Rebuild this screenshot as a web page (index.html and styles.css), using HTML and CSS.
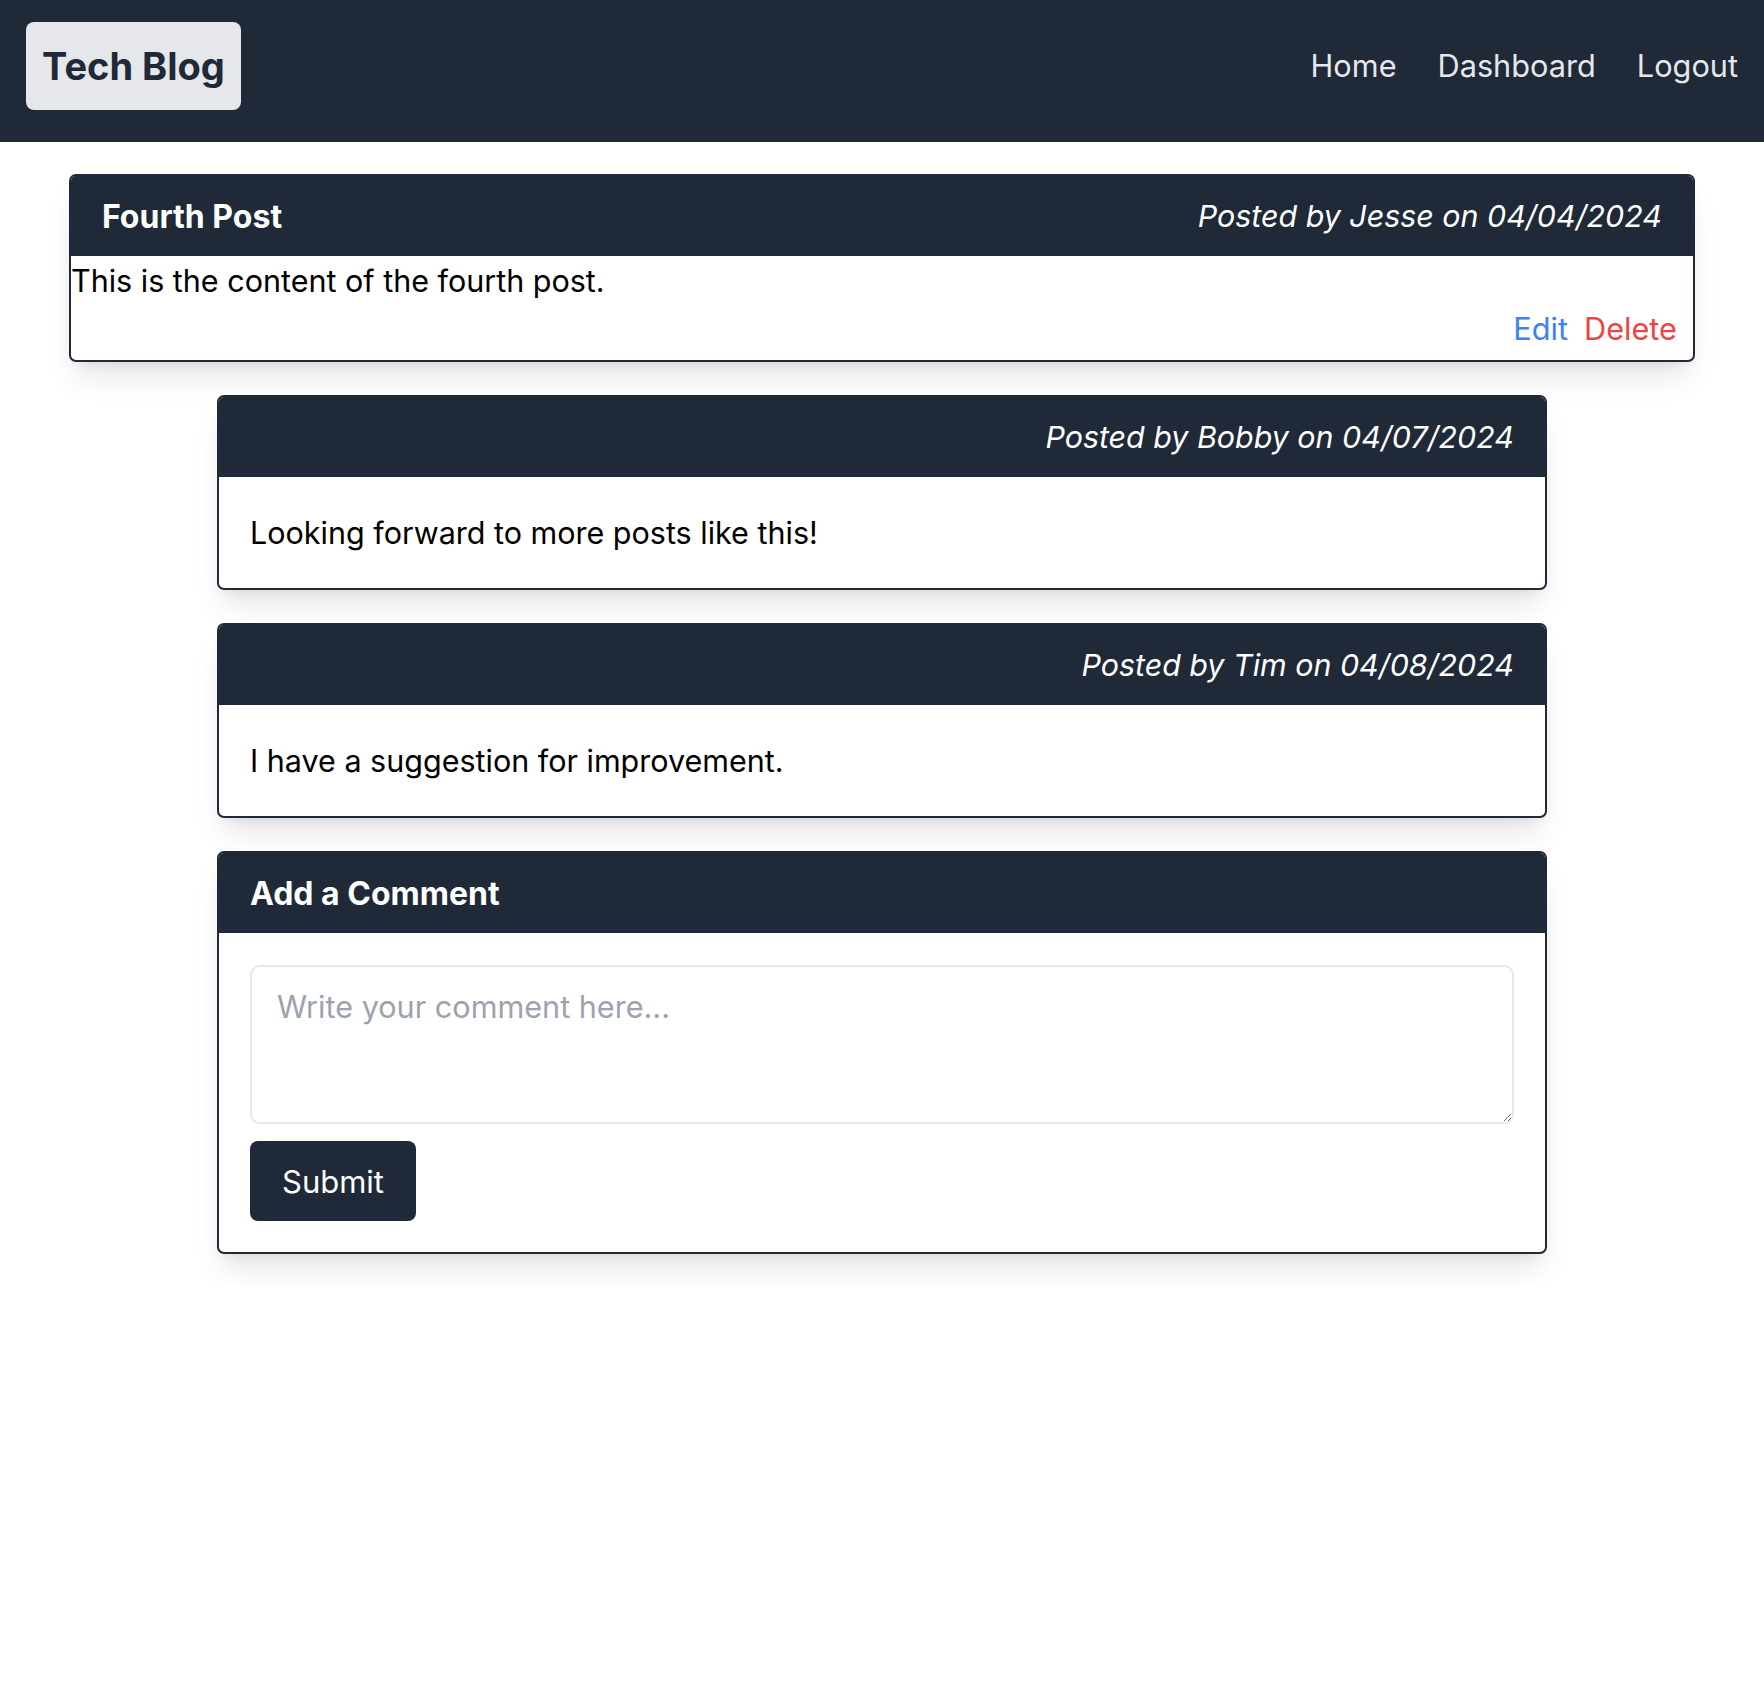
FILE: index.html
```html
<!DOCTYPE html>
<html lang="en">
<head>
<meta charset="utf-8">
<title>Tech Blog</title>
<link rel="stylesheet" href="styles.css">
</head>
<body>
<header class="navbar">
  <a class="logo" href="#">Tech Blog</a>
  <nav class="nav-links">
    <a href="#">Home</a>
    <a href="#">Dashboard</a>
    <a href="#">Logout</a>
  </nav>
</header>
<main class="main">
  <article class="card card-post">
    <div class="card-header">
      <h2 class="card-title">Fourth Post</h2>
      <span class="meta">Posted by Jesse on 04/04/2024</span>
    </div>
    <div class="post-body">
      <p class="post-content">This is the content of the fourth post.</p>
      <div class="post-actions">
        <a class="edit" href="#">Edit</a>
        <a class="delete" href="#">Delete</a>
      </div>
    </div>
  </article>

  <article class="card card-narrow">
    <div class="card-header header-end">
      <span class="meta">Posted by Bobby on 04/07/2024</span>
    </div>
    <div class="card-body">
      <p class="comment-text">Looking forward to more posts like this!</p>
    </div>
  </article>

  <article class="card card-narrow">
    <div class="card-header header-end">
      <span class="meta">Posted by Tim on 04/08/2024</span>
    </div>
    <div class="card-body">
      <p class="comment-text">I have a suggestion for improvement.</p>
    </div>
  </article>

  <section class="card card-narrow">
    <div class="card-header">
      <h2 class="card-title">Add a Comment</h2>
    </div>
    <form class="card-body comment-form">
      <textarea class="comment-input" placeholder="Write your comment here..."></textarea>
      <button class="submit-btn" type="button">Submit</button>
    </form>
  </section>
</main>
</body>
</html>
```
FILE: styles.css
```css
* { box-sizing: border-box; }

body {
  margin: 0;
  font-family: Inter, "Noto Sans", "Liberation Sans", sans-serif;
  color: #000;
  background: #fff;
}

a { text-decoration: none; }

.navbar {
  background: #1f2937;
  height: 142px;
  padding: 22px 26px 32px;
  display: flex;
  align-items: center;
  justify-content: space-between;
}

.logo {
  display: block;
  height: 88px;
  line-height: 88px;
  padding: 0 16px;
  background: #e5e7eb;
  color: #1f2937;
  border-radius: 8px;
  font-size: 38px;
  font-weight: 700;
}

.nav-links {
  display: flex;
  gap: 41px;
}

.nav-links a {
  color: #e5e7eb;
  font-size: 30.7px;
  line-height: 44px;
}

.main {
  padding: 32px 0;
  display: flex;
  flex-direction: column;
  align-items: center;
  gap: 33px;
}

.card {
  border: 2px solid #1f2937;
  border-radius: 7px;
  overflow: hidden;
  background: #fff;
  box-shadow: 0 20px 30px -6px rgba(0,0,0,0.1), 0 8px 12px -8px rgba(0,0,0,0.1);
}

.card-post { width: 1626px; }
.card-narrow { width: 1330px; }

.card-header {
  background: #1f2937;
  color: #fff;
  height: 80px;
  padding: 0 31px;
  display: flex;
  align-items: center;
  justify-content: space-between;
}

.header-end { justify-content: flex-end; }

.card-title {
  margin: 0;
  font-size: 32px;
  font-weight: 700;
}

.meta {
  font-size: 30.4px;
  font-style: italic;
}

.post-body {
  padding: 1px 16px 7px 0;
}

.post-content {
  margin: 0;
  font-size: 30.5px;
  line-height: 48px;
}

.post-actions {
  display: flex;
  justify-content: flex-end;
  gap: 16px;
  font-size: 30.7px;
  line-height: 48px;
}

.edit { color: #3b82f6; }
.delete { color: #ef4444; }

.card-body {
  padding: 31px;
}

.comment-text {
  margin: 0;
  font-size: 30.5px;
  line-height: 49px;
}

.comment-form {
  display: flex;
  flex-direction: column;
  align-items: flex-start;
  gap: 17px;
  padding-top: 32px;
  padding-bottom: 31px;
}

.comment-input {
  width: 100%;
  height: 159px;
  border: 2px solid #e5e7eb;
  border-radius: 10px;
  padding: 16px 25px;
  font-family: inherit;
  font-size: 30.6px;
  line-height: 48px;
  resize: vertical;
  outline: none;
}

.comment-input::placeholder { color: #9ca3af; }

.submit-btn {
  height: 80px;
  padding: 0 32px;
  border: none;
  border-radius: 8px;
  background: #1f2937;
  color: #fff;
  font-family: inherit;
  font-size: 31px;
}
```
